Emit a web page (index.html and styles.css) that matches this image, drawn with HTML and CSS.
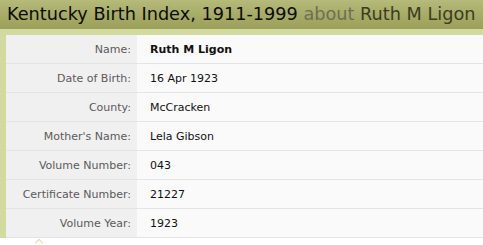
FILE: index.html
```html
<!DOCTYPE html>
<html>
<head>
<meta charset="utf-8">
<link rel="stylesheet" href="styles.css">
</head>
<body>
<div class="page">
  <h1 class="title">Kentucky Birth Index, 1911-1999 <span class="about">about</span> <span class="person">Ruth M Ligon</span></h1>
  <div class="frame">
    <table class="record">
      <tr><th>Name:</th><td><strong>Ruth M Ligon</strong></td></tr>
      <tr><th>Date of Birth:</th><td>16 Apr 1923</td></tr>
      <tr><th>County:</th><td>McCracken</td></tr>
      <tr><th>Mother's Name:</th><td>Lela Gibson</td></tr>
      <tr><th>Volume Number:</th><td>043</td></tr>
      <tr><th>Certificate Number:</th><td>21227</td></tr>
      <tr><th>Volume Year:</th><td>1923</td></tr>
    </table>
    <span class="caret"></span>
  </div>
</div>
</body>
</html>
```
FILE: styles.css
```css
html, body {
  margin: 0;
  padding: 0;
  background: #ffffff;
}
.page {
  width: 483px;
  height: 245px;
  overflow: hidden;
  position: relative;
}
.title {
  margin: 0;
  height: 29px;
  line-height: 29px;
  padding-left: 7px;
  font-family: "DejaVu Sans", sans-serif;
  font-weight: normal;
  font-size: 17.7px;
  color: #0c0c08;
  white-space: nowrap;
  background: linear-gradient(#b6ba7a, #a4a963 60%, #9ca05a);
}
.about {
  color: #6e6f56;
}
.person {
  color: #3b3c22;
}
.frame {
  position: relative;
  background: #d2da9f;
  padding: 6px 0 0 6px;
}
.record {
  border-collapse: collapse;
  width: 100%;
  font-family: "DejaVu Sans", Verdana, sans-serif;
  font-size: 11px;
}
.record th {
  width: 131px;
  box-sizing: border-box;
  height: 28px;
  padding: 0 6px 0 0;
  text-align: right;
  font-weight: normal;
  color: #5a5a5a;
  background: #f0f0f0;
  border-bottom: 1px solid #e4e4e4;
}
.record td {
  height: 28px;
  padding: 0 0 0 13px;
  color: #111111;
  background: #fafafa;
  border-bottom: 1px solid #e4e4e4;
}
.caret {
  position: absolute;
  left: 36px;
  top: 211px;
  width: 5px;
  height: 5px;
  border-left: 1px solid #f0d6a0;
  border-top: 1px solid #f0d6a0;
  transform: rotate(45deg);
}
```
